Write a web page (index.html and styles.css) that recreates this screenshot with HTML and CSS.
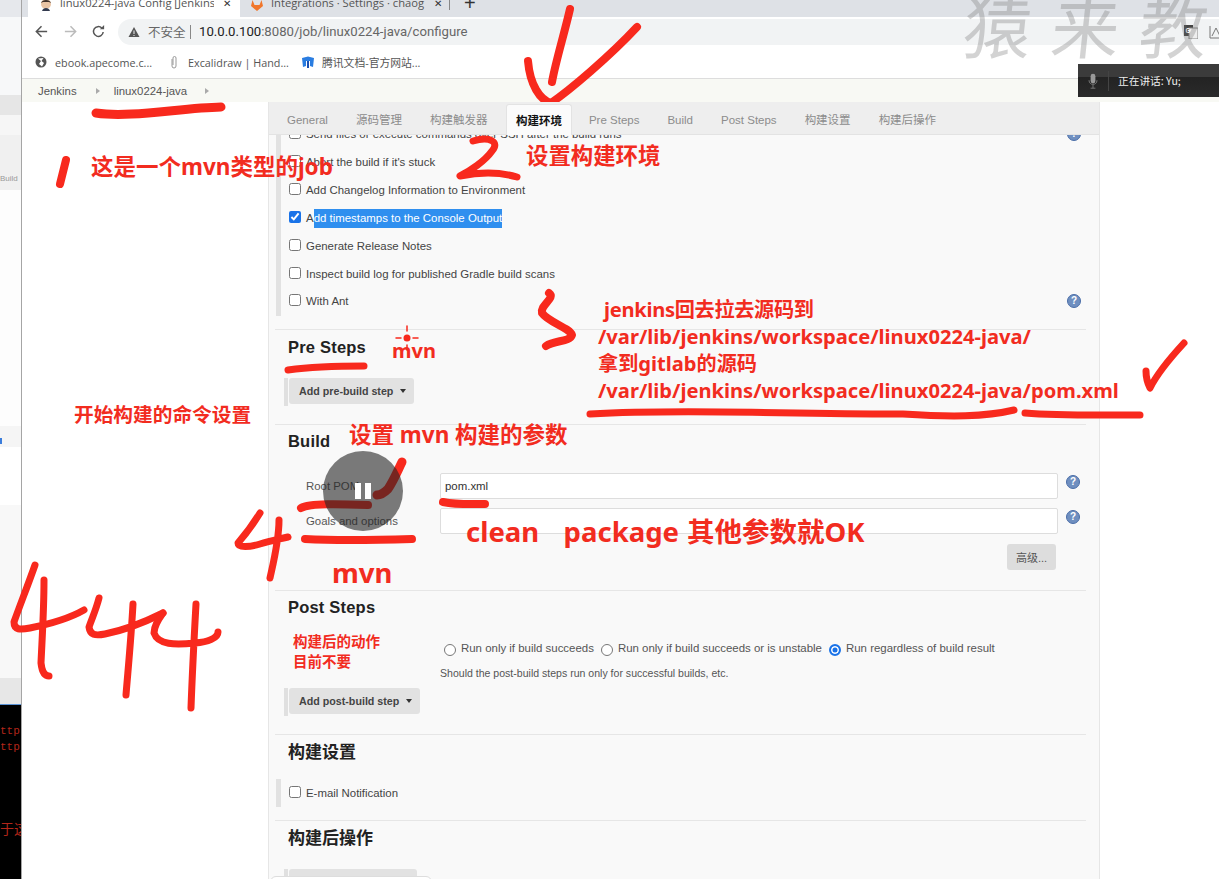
FILE: index.html
```html
<!DOCTYPE html>
<html lang="zh-CN">
<head>
<meta charset="utf-8">
<title>linux0224-java Config [Jenkins]</title>
<link rel="stylesheet" href="styles.css">
</head>
<body>
<div class="desktop">
  <aside class="behind">
    <div class="b b1"></div><div class="b b2"></div><div class="b b3"></div><div class="b b4"></div>
    <div class="b b5"><span>Build</span></div><div class="b b6"></div>
    <div class="b b7"><i class="dot"></i></div><div class="b b8"></div><div class="b b9"></div><div class="b b10"></div>
    <div class="term"><p class="t1">ttp</p><p>ttp</p><p class="t2">于这</p></div>
  </aside>
  <div class="window">
    <div class="tabstrip">
      <div class="btab active">
        <svg class="fav" viewBox="0 0 12 12"><circle cx="6" cy="5" r="5" fill="#e9c4a4"/><path d="M1 4C2 0 10 0 11 4L9 3H3Z" fill="#40322b"/><path d="M2 12C3 8 9 8 10 12Z" fill="#333b4f"/></svg>
        <span class="btitle">linux0224-java Config [Jenkins</span><span class="bx">✕</span>
      </div>
      <div class="btab second">
        <svg class="fav" viewBox="0 0 12 12"><path d="M6 12L0 7 1.500 1 3.500 6H8.500L10.500 1 12 7Z" fill="#f0762b"/></svg>
        <span class="btitle">Integrations · Settings · chaog</span><span class="bx">✕</span>
      </div>
      <i class="sep"></i><span class="plus">+</span>
    </div>
    <div class="toolbar">
      <svg class="nav" viewBox="0 0 16 16"><path d="M14 8H3M8 2.500L2.500 8 8 13.500" fill="none" stroke="#555" stroke-width="1.600"/></svg>
      <svg class="nav dim" viewBox="0 0 16 16"><path d="M2 8H13M8 2.500L13.500 8 8 13.500" fill="none" stroke="#bbb" stroke-width="1.600"/></svg>
      <svg class="nav" viewBox="0 0 16 16"><path d="M13 8.500A5.200 5.200 0 1 1 11.500 4.300" fill="none" stroke="#555" stroke-width="1.600"/><path d="M9.500 5.500H14V1Z" fill="#555"/></svg>
      <div class="omni">
        <svg class="warn" viewBox="0 0 12 12"><path d="M6 1L11.500 11H.5Z" fill="#555"/><path d="M6 4.500V8M6 9V10" stroke="#f1f3f4" stroke-width="1"/></svg>
        <span class="insecure">不安全</span><i class="bar"></i>
        <span class="url"><b>10.0.0.100</b>:8080/job/linux0224-java/configure</span>
        <span class="ext"><svg class="gt" viewBox="0 0 14 14"><rect x="0" y="0" width="9" height="11" fill="#444"/><rect x="5" y="3" width="9" height="11" fill="#eee" stroke="#888"/><text x="1.500" y="8" class="gtx">G</text></svg><svg class="gt2" viewBox="0 0 14 14"><path d="M1 1V13H13" fill="none" stroke="#777"/><path d="M3 11L7 3 11 11" fill="none" stroke="#777"/></svg></span>
      </div>
    </div>
    <div class="bookmarks">
      <svg class="bk-ico" viewBox="0 0 12 12"><circle cx="6" cy="6" r="5.500" fill="#555"/><path d="M3 2.500L6 5 4 8 7 10.500 9 7 6.500 5 8.500 2" fill="#fff"/></svg>
      <span class="bk w1">ebook.apecome.c...</span>
      <svg class="bk-ico clip" viewBox="0 0 8 14"><path d="M2 4V11A2 2 0 0 0 6 11V3A1.500 1.500 0 0 0 3 3V10" fill="none" stroke="#999" stroke-width="1"/></svg>
      <span class="bk w2">Excalidraw | Hand...</span>
      <svg class="bk-ico tx" viewBox="0 0 12 12"><path d="M0 2L6 .5 12 2 11 11 8 10V5H4V10L1 11Z" fill="#2a7de1"/><rect x="5" y="5" width="2" height="7" fill="#1b4fb0"/></svg>
      <span class="bk">腾讯文档-官方网站...</span>
    </div>
    <nav class="crumbs"><span>Jenkins</span><i class="tri t-a"></i><span>linux0224-java</span><i class="tri t-b"></i></nav>
    <div class="main">
      <div class="leftcol"></div>
      <section class="panel">
        <div class="tabs">
          <span>General</span><span>源码管理</span><span>构建触发器</span><span class="on">构建环境</span><span>Pre Steps</span><span>Build</span><span>Post Steps</span><span>构建设置</span><span>构建后操作</span>
        </div>
        <div class="form">
          <div class="env">
            <label class="row"><input type="checkbox"><span>Send files or execute commands over SSH after the build runs</span><i class="help">?</i></label>
            <label class="row"><input type="checkbox"><span>Abort the build if it's stuck</span></label>
            <label class="row"><input type="checkbox"><span>Add Changelog Information to Environment</span></label>
            <label class="row"><input type="checkbox" checked><span>A<mark>dd timestamps to the Console Output</mark></span></label>
            <label class="row"><input type="checkbox"><span>Generate Release Notes</span></label>
            <label class="row"><input type="checkbox"><span>Inspect build log for published Gradle build scans</span></label>
            <label class="row"><input type="checkbox"><span>With Ant</span><i class="help">?</i></label>
          </div>
          <div class="sec pre">
            <h2>Pre Steps</h2>
            <div class="addwrap"><button class="add">Add pre-build step<i class="caret"></i></button></div>
          </div>
          <div class="sec build">
            <h2>Build</h2>
            <div class="field first"><span class="flabel">Root POM</span><div class="fake-input">pom.xml</div><i class="help">?</i></div>
            <div class="field"><span class="flabel">Goals and options</span><div class="fake-input"></div><i class="help">?</i></div>
            <div class="advrow"><button class="adv">高级...</button></div>
          </div>
          <div class="sec post">
            <h2>Post Steps</h2>
            <div class="radios">
              <label><i class="radio"></i>Run only if build succeeds</label>
              <label><i class="radio"></i>Run only if build succeeds or is unstable</label>
              <label><i class="radio sel"></i>Run regardless of build result</label>
            </div>
            <p class="hint">Should the post-build steps run only for successful builds, etc.</p>
            <div class="addwrap"><button class="add">Add post-build step<i class="caret"></i></button></div>
          </div>
          <div class="sec settings">
            <h2>构建设置</h2>
            <label class="row mail"><input type="checkbox"><span>E-mail Notification</span></label>
          </div>
          <div class="sec after">
            <h2>构建后操作</h2>
            <div class="addwrap"><button class="add last">增加构建后操作步骤<i class="caret"></i></button></div>
          </div>
        </div>
      </section>
    </div>
  </div>
</div>

<div class="bottompill"></div>
<div class="watermark">猿来教</div>
<div class="speaking">
  <svg class="mic" viewBox="0 0 12 20"><rect x="3" y="1" width="6" height="12" rx="3" fill="#999"/><path d="M1 9C1 16 11 16 11 9M6 15V19M3 19H9" fill="none" stroke="#888"/></svg>
  <i class="micsep"></i><span>正在讲话: Yu;</span>
</div>

<svg class="ink" viewBox="0 0 1219 879">
  <g fill="none" stroke="#f8291d" stroke-linecap="round" stroke-linejoin="round">
    <path stroke-width="8" d="M570 9C564 35 556 60 552 82"/>
    <path stroke-width="8" d="M528 61C530 85 540 100 551 103C570 90 610 56 637 27"/>
    <path stroke-width="9" d="M96 113C130 118 180 108 221 107"/>
    <path stroke-width="8" d="M66 160L60 184"/>
    <path stroke-width="7" d="M473 141C490 136 500 142 492 151C485 161 470 171 460 176C480 172 500 172 517 177"/>
    <path stroke-width="8" d="M549 293C556 298 540 305 542 313C548 322 570 328 572 335C570 342 555 340 546 346"/>
    <path stroke-width="7" d="M288 370C310 367 340 366 364 366"/>
    <circle cx="407" cy="338" r="3.500" fill="#f8291d" stroke="none"/>
    <path stroke-width="1.500" d="M396 338H401M413 338H418M407 326V331M407 345V350"/>
    <path stroke-width="8" d="M301 508C310 503 340 504 368 505"/>
    <path stroke-width="9" d="M377 495C382 495 385 492 388 489C394 480 398 470 402 462"/>
    <path stroke-width="7" d="M260 513C252 526 245 535 238 543C238 548 250 547 260 544C270 541 280 539 288 537M279 520C279 540 274 560 270 578"/>
    <path stroke-width="8" d="M305 539C340 541 380 540 412 539"/>
    <path stroke-width="8" d="M443 502C458 505 472 504 485 504"/>
    <path stroke-width="7" d="M590 414C680 409 800 414 903 414C950 417 985 417 1014 410"/>
    <path stroke-width="7" d="M1025 413C1060 416 1100 415 1140 415"/>
    <path stroke-width="7" d="M1146 371C1146 378 1148 384 1150 388C1158 372 1172 356 1184 343"/>
    <path stroke-width="7" d="M35 565C28 585 20 605 14 622C14 630 20 630 30 628C50 624 70 618 84 610M44 580C44 610 42 640 41 663C42 672 45 676 49 676"/>
    <path stroke-width="7" d="M99 598C96 610 92 618 89 627C90 635 95 636 105 634C125 630 145 622 163 613M133 604C131 640 128 670 126 695"/>
    <path stroke-width="7" d="M163 613C158 620 154 626 154 633C158 645 175 645 195 643C208 642 218 638 218 632M196 604C194 640 192 680 191 708"/>
  </g>
</svg>

<div class="note n-job">这是一个mvn类型的job</div>
<div class="note n-env">设置构建环境</div>
<div class="note n-path"><p class="indent">jenkins回去拉去源码到</p><p>/var/lib/jenkins/workspace/linux0224-java/</p><p>拿到gitlab的源码</p><p>/var/lib/jenkins/workspace/linux0224-java/pom.xml</p></div>
<div class="note n-mvn1">mvn</div>
<div class="note n-cmd">开始构建的命令设置</div>
<div class="note n-args">设置 mvn 构建的参数</div>
<div class="note n-clean">clean&nbsp;&nbsp; package 其他参数就OK</div>
<div class="note n-mvn2">mvn</div>
<div class="note n-after"><p>构建后的动作</p><p>目前不要</p></div>

<div class="pause"><i></i><i></i></div>
</body>
</html>
```
FILE: styles.css
```css
* { box-sizing: border-box; }
html, body { margin: 0; padding: 0; }
body {
  width: 1219px; height: 879px; overflow: hidden; position: relative; background: #fff;
  font-family: "Liberation Sans", "Noto Sans CJK SC", sans-serif; font-size: 11.430px; color: #333;
}
p { margin: 0; }
.desktop { display: flex; height: 879px; }

/* window behind */
.behind { width: 22px; flex: none; display: flex; flex-direction: column; border-right: 1px solid #a5a5a5; background: #fafafa; overflow: hidden; }
.b { flex: none; overflow: hidden; white-space: nowrap; }
.b1 { height: 17px; background: #e6e8ec; }
.b2 { height: 78px; background: #f7f8f9; }
.b3 { height: 20px; background: #e6e6e6; }
.b4 { height: 20px; background: #f6f6f6; }
.b5 { height: 55px; background: #f0f0f0; font-size: 8px; color: #999; padding-top: 39px; line-height: 10px; }
.b6 { height: 236px; background: #fdfdfd; }
.b7 { height: 21px; background: #f5f5f5; }
.b8 { height: 58px; background: #fff; }
.b9 { height: 173px; background: #f8f8f8; }
.b10 { height: 27px; background: #e7e7e7; border-bottom: 1px solid #5b93d6; }
.dot { display: block; width: 2px; height: 6px; background: #3b7ddb; margin-top: 12px; }
.term { flex: 1; background: #000; color: #b3261a; font-family: "Liberation Mono", monospace; font-size: 11px; line-height: 16px; padding-top: 18px; white-space: nowrap; overflow: hidden; }
.term .t2 { margin-top: 65px; font-family: "Noto Sans CJK SC", sans-serif; font-size: 14px; }

/* browser */
.window { flex: 1; min-width: 0; display: flex; flex-direction: column; }
.tabstrip { height: 17px; flex: none; background: #dee1e6; display: flex; align-items: flex-end; overflow: hidden; padding-left: 6px; }
.btab { height: 17px; display: flex; align-items: flex-end; padding-bottom: 7px; flex: none; color: #555; font-family: "Open Sans", "Noto Sans CJK SC", sans-serif; font-size: 11.200px; line-height: 14px; }
.btab.active { width: 212px; background: #fff; padding-left: 12px; }
.btab.second { width: 210px; padding-left: 11px; }
.fav { width: 12px; height: 12px; flex: none; margin-right: 8px; margin-bottom: -1px; }
.btitle { width: 154px; overflow: hidden; white-space: nowrap; }
.bx { margin-left: 9px; font-size: 10px; color: #333; }
.sep { width: 1px; height: 10px; align-self: flex-start; background: #888; margin-left: -1px; }
.plus { font-size: 20px; line-height: 12px; margin-left: 14px; align-self: flex-start; color: #333; margin-top: -3px; }

.toolbar { height: 29px; flex: none; background: #fff; display: flex; align-items: center; padding-left: 12px; }
.nav { width: 15px; height: 15px; flex: none; margin-right: 13.500px; }
.omni { flex: 1; height: 26px; margin-left: -1.500px; background: #f1f3f4; border-radius: 13px 0 0 13px; display: flex; align-items: center; padding-left: 10px; font-family: "Roboto", "Noto Sans CJK SC", sans-serif; color: #666; font-size: 14px; white-space: nowrap; }
.warn { width: 12px; height: 12px; flex: none; margin-right: 8px; }
.insecure { font-size: 12.500px; width: 38px; flex: none; color: #666; }
.bar { width: 1px; height: 14px; background: #888; margin: 0 8px 0 4px; flex: none; }
.url { font-size: 13.160px; color: #666; flex: 1; }
.url b { font-weight: 400; color: #222; }
.ext { display: flex; align-items: center; gap: 11px; flex: none; margin-right: -4px; }
.gt, .gt2 { width: 14px; height: 14px; flex: none; }
.gtx { font-size: 7px; fill: #fff; font-weight: 700; }

.bookmarks { height: 32px; flex: none; background: #fff; display: flex; align-items: center; padding-left: 13px; font-family: "Open Sans", "Noto Sans CJK SC", sans-serif; font-size: 10.800px; color: #555; white-space: nowrap; }
.bk-ico { width: 12px; height: 12px; flex: none; margin-right: 8px; }
.bk-ico.clip { width: 8px; height: 14px; margin-right: 10px; }
.w1 { width: 115px; }
.w2 { width: 114px; }

.crumbs { height: 24px; flex: none; background: #f8f9f4; border-top: 1px solid #ddd; display: flex; align-items: center; padding-left: 16px; color: #555; font-size: 11.400px; }
.tri { width: 0; height: 0; border-left: 4px solid #aaa; border-top: 3.500px solid transparent; border-bottom: 3.500px solid transparent; flex: none; }
.t-a { margin: 0 14px 0 19px; }
.t-b { margin-left: 18px; }

.main { flex: 1; min-height: 0; display: flex; background: #fff; }
.leftcol { width: 246px; flex: none; }
.panel { width: 832px; flex: none; border-left: 1px solid #e6e6e6; border-right: 1px solid #e6e6e6; background: #f9f9f9; display: flex; flex-direction: column; overflow: hidden; }
.tabs { height: 33px; flex: none; background: #eee; display: flex; align-items: flex-end; padding-left: 4px; border-bottom: 1px solid #e3e3e3; color: #8c8c8c; font-size: 11.500px; position: relative; z-index: 1; }
.tabs span { height: 30px; line-height: 32px; padding: 0 14px; flex: none; }
.tabs .on { background: #fbfbfb; color: #111; font-weight: 700; padding: 0 9px; margin: 0 3px -1px 4.500px; border: 1px solid #e3e3e3; border-bottom: none; border-radius: 3px 3px 0 0; height: 31px; }

.form { flex: 1; min-height: 0; overflow: hidden; }
.env { margin: -15px 0 0 7px; border-left: 5px solid #e2e2e2; padding: 0 18px 0 8px; height: 196px; }
.env .row:last-child { height: 26px; }
.row { height: 28px; display: flex; align-items: center; color: #444; white-space: nowrap; }
.row input { width: 12px; height: 12px; margin: 0 5px 2px 0; flex: none; accent-color: #1a73e8; }
.row mark { background: #2f8fef; color: #fff; display: inline-block; height: 19px; line-height: 19px; }
.help { width: 14px; height: 14px; border-radius: 50%; background: #6f8fc0; border: 1px solid #4b6ea8; color: #fff; font-style: normal; font-weight: 700; font-size: 10px; line-height: 12px; text-align: center; margin-left: auto; flex: none; }

.sec { margin-left: 6px; margin-right: 13px; border-top: 1px solid #e6e6e6; padding-left: 13px; }
.sec h2 { margin: 0; font-size: 16.500px; line-height: 22px; font-weight: 700; color: #222; letter-spacing: .2px; }
.pre { height: 95px; padding-top: 6px; margin-top: 13px; }
.addwrap { border-left: 4px solid #e0e0e0; margin-left: -4px; height: 28px; padding-left: 1px; }
.pre .addwrap { margin-top: 20px; }
.add { height: 26px; border: none; background: #e2e2e2; border-radius: 3px; padding: 0 8px 0 10px; font: 700 10.700px "Liberation Sans", "Noto Sans CJK SC", sans-serif; color: #444; display: flex; align-items: center; }
.caret { width: 0; height: 0; border-top: 4px solid #333; border-left: 3.500px solid transparent; border-right: 3.500px solid transparent; margin-left: 7px; }

.build { height: 166px; padding-top: 5px; }
.field { display: flex; align-items: center; height: 26px; }
.field.first { margin: 21px 0 9px; }
.flabel { width: 152px; padding-left: 18px; flex: none; color: #555; font-size: 11.400px; }
.fake-input { width: 618px; height: 26px; background: #fff; border: 1px solid #ddd; border-radius: 2px; padding-left: 4px; line-height: 24px; color: #333; flex: none; }
.build .help { margin-left: 8px; margin-top: -8px; }
.advrow { margin-top: 10px; padding-left: 719px; }
.adv { display: block; width: 49px; height: 26px; border: none; background: #ddd; border-radius: 3px; font: 11px "Liberation Sans", "Noto Sans CJK SC", sans-serif; color: #555; padding: 0; }

.post { height: 144px; padding-top: 5px; }
.radios { display: flex; margin: 23px 0 0 156px; color: #555; line-height: 14px; font-size: 11.450px; }
.radios label { display: flex; margin-right: 7px; white-space: nowrap; }
.radio { width: 12px; height: 12px; margin: 3px 5px 0 0; border: 1px solid #777; border-radius: 50%; background: #fff; flex: none; }
.radio.sel { border: 2px solid #1a73e8; box-shadow: inset 0 0 0 1.500px #fff; background: #1a73e8; }
.hint { margin: 11px 0 0 152px; font-size: 10.560px; line-height: 13px; color: #555; }
.post .addwrap { margin-top: 8px; }

.settings { height: 86px; padding-top: 7px; }
.settings h2, .after h2 { font-size: 17px; letter-spacing: 0; }
.row.mail { margin: 15px 0 0 -12px; padding-left: 8px; border-left: 5px solid #e2e2e2; }
.after { padding-top: 7px; height: 70px; }
.after .addwrap { margin-top: 19px; }
.add.last { width: 128px; color: #e2e2e2; }

/* overlays */
.bottompill { position: absolute; left: 270px; top: 876px; width: 162px; height: 12px; background: #fff; border: 1px solid #ddd; border-radius: 6px; }
.watermark { position: absolute; left: 964px; top: -19px; font-family: "Noto Sans CJK TC", "Noto Sans CJK SC", sans-serif; font-size: 68px; line-height: 86px; letter-spacing: 20px; color: rgba(110, 110, 110, .3); white-space: nowrap; transform: skewX(-6deg); }
.speaking { position: absolute; left: 1078px; top: 64px; width: 141px; height: 33px; background: linear-gradient(#3b3b3b, #3b3b3b 40%, #232323 40%, #2a2a2a); display: flex; align-items: center; color: #eee; font-family: "Noto Sans CJK SC", sans-serif; font-size: 10.700px; white-space: nowrap; }
.mic { width: 10px; height: 16px; margin-left: 10px; flex: none; }
.micsep { width: 1px; height: 20px; background: #444; margin: 0 9px 0 10px; flex: none; }
.ink { position: absolute; left: 0; top: 0; width: 1219px; height: 879px; pointer-events: none; }

.note { position: absolute; color: #f22c1f; font-family: "Noto Sans", "Noto Sans CJK SC", sans-serif; font-weight: 700; white-space: nowrap; pointer-events: none; }
.n-job { left: 91px; top: 152px; font-size: 22.500px; line-height: 30px; }
.n-env { left: 526px; top: 141px; font-size: 22.400px; line-height: 30px; }
.n-path { left: 598px; top: 296px; font-size: 20.150px; line-height: 27px; }
.indent { padding-left: 6px; letter-spacing: -.3px; }
.n-mvn1 { left: 392px; top: 336px; font-size: 20px; line-height: 30px; }
.n-cmd { left: 74px; top: 400px; font-size: 19.700px; line-height: 30px; }
.n-args { left: 349px; top: 420px; font-size: 22.500px; line-height: 30px; }
.n-clean { left: 466px; top: 512px; font-size: 27.500px; line-height: 40px; word-spacing: 1px; }
.n-mvn2 { left: 332px; top: 553px; font-size: 27.500px; line-height: 40px; }
.n-after { left: 293px; top: 631px; font-size: 14.500px; line-height: 20px; }

.pause { position: absolute; left: 323px; top: 451px; width: 80px; height: 80px; border-radius: 50%; background: rgba(35, 35, 35, .6); display: flex; align-items: center; justify-content: center; gap: 3.500px; }
.pause i { width: 6.500px; height: 16px; background: #fff; }
```
